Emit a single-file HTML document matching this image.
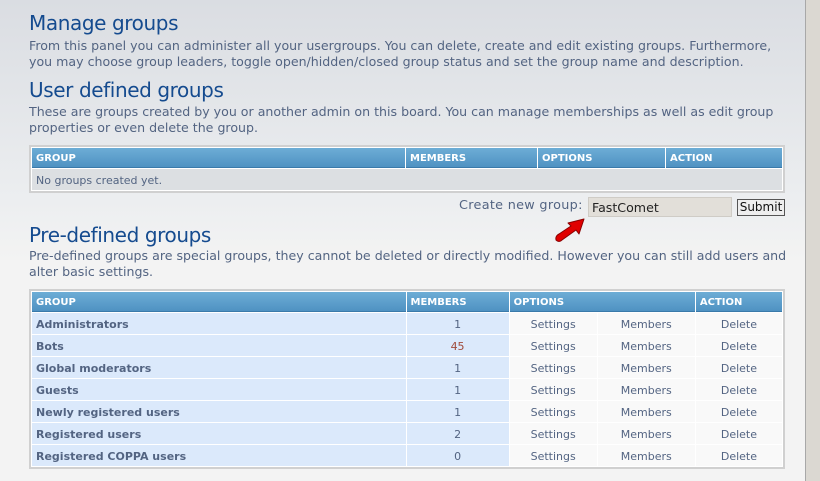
<!DOCTYPE html>
<html><head><style>
*{margin:0;padding:0;box-sizing:border-box}
body{width:820px;height:481px;overflow:hidden;position:relative;font-family:"DejaVu Sans","Liberation Sans",sans-serif;background:linear-gradient(#dadde2 0px,#eceef0 200px,#f3f3f3 260px,#f3f3f3);}
.strip{position:absolute;left:805px;top:0;width:15px;height:481px;background:#dbd8d2;border-left:1px solid #a8a8a8}
h1{position:absolute;left:29px;font-family:"DejaVu Sans","Liberation Sans",sans-serif;font-weight:normal;font-size:20px;color:#154b8f;letter-spacing:-0.4px}
p{position:absolute;left:29px;width:760px;font-size:12.6px;line-height:16px;color:#536482}
table{position:absolute;left:29px;width:756px;border:2px solid #d0d0d0;border-collapse:separate;border-spacing:1px;background:#fff;font-size:11px}
th{height:20px;background:linear-gradient(#6dadd6,#4f92c2);color:#fff;font-size:10px;font-weight:bold;text-align:left;padding-left:4px;padding-top:2px;border-bottom:1px solid #3a7aaa}
td{height:21px;color:#536482;font-size:11px;padding-top:1px}
.g{background:#dbe9fb;font-weight:bold;padding-left:4px}
.m{background:#dbe9fb;text-align:center}
.o{background:#f9f9f9;text-align:center}
</style></head><body>
<div class="strip"></div>
<h1 style="top:11px">Manage groups</h1>
<p style="top:38px">From this panel you can administer all your usergroups. You can delete, create and edit existing groups. Furthermore, you may choose group leaders, toggle open/hidden/closed group status and set the group name and description.</p>
<h1 style="top:78px">User defined groups</h1>
<p style="top:104px">These are groups created by you or another admin on this board. You can manage memberships as well as edit group properties or even delete the group.</p>
<table style="top:145px;height:47px">
<tr><th style="width:373px">GROUP</th><th style="width:131px">MEMBERS</th><th style="width:127px">OPTIONS</th><th>ACTION</th></tr>
<tr><td colspan="4" style="background:#dcdfe2;padding-left:4px">No groups created yet.</td></tr>
</table>
<div style="position:absolute;left:459px;top:198px;font-size:12.8px;color:#536482;letter-spacing:0.3px">Create new group:</div>
<div style="position:absolute;left:588px;top:197px;width:144px;height:20px;background:#e2dfd9;border:1px solid #cfccc6;font-size:12.6px;color:#222;padding:2px 3px">FastComet</div>
<div style="position:absolute;left:737px;top:199px;width:48px;height:17px;background:#eeeeee;border:1px solid #555;font-size:12px;color:#111;text-align:center;line-height:15px">Submit</div>
<svg style="position:absolute;left:550px;top:212px" width="45" height="32" viewBox="0 0 45 32"><path d="M6 28 Q5 24 9 22 L21 14 L18 11 L34 7 L29 22 L26 18 L12 28 Q9 31 6 28 Z" fill="#e00000" stroke="#8a0000" stroke-width="1" stroke-linejoin="round"/></svg>
<h1 style="top:223px">Pre-defined groups</h1>
<p style="top:248px">Pre-defined groups are special groups, they cannot be deleted or directly modified. However you can still add users and alter basic settings.</p>
<table style="top:289px">
<tr><th style="width:373px">GROUP</th><th style="width:102px">MEMBERS</th><th colspan="2">OPTIONS</th><th style="width:86px">ACTION</th></tr>
<tr><td class="g">Administrators</td><td class="m">1</td><td class="o" style="width:87px">Settings</td><td class="o" style="width:97px">Members</td><td class="o">Delete</td></tr>
<tr><td class="g">Bots</td><td class="m" style="color:#a04a3a">45</td><td class="o">Settings</td><td class="o">Members</td><td class="o">Delete</td></tr>
<tr><td class="g">Global moderators</td><td class="m">1</td><td class="o">Settings</td><td class="o">Members</td><td class="o">Delete</td></tr>
<tr><td class="g">Guests</td><td class="m">1</td><td class="o">Settings</td><td class="o">Members</td><td class="o">Delete</td></tr>
<tr><td class="g">Newly registered users</td><td class="m">1</td><td class="o">Settings</td><td class="o">Members</td><td class="o">Delete</td></tr>
<tr><td class="g">Registered users</td><td class="m">2</td><td class="o">Settings</td><td class="o">Members</td><td class="o">Delete</td></tr>
<tr><td class="g">Registered COPPA users</td><td class="m">0</td><td class="o">Settings</td><td class="o">Members</td><td class="o">Delete</td></tr>
</table>
</body></html>
